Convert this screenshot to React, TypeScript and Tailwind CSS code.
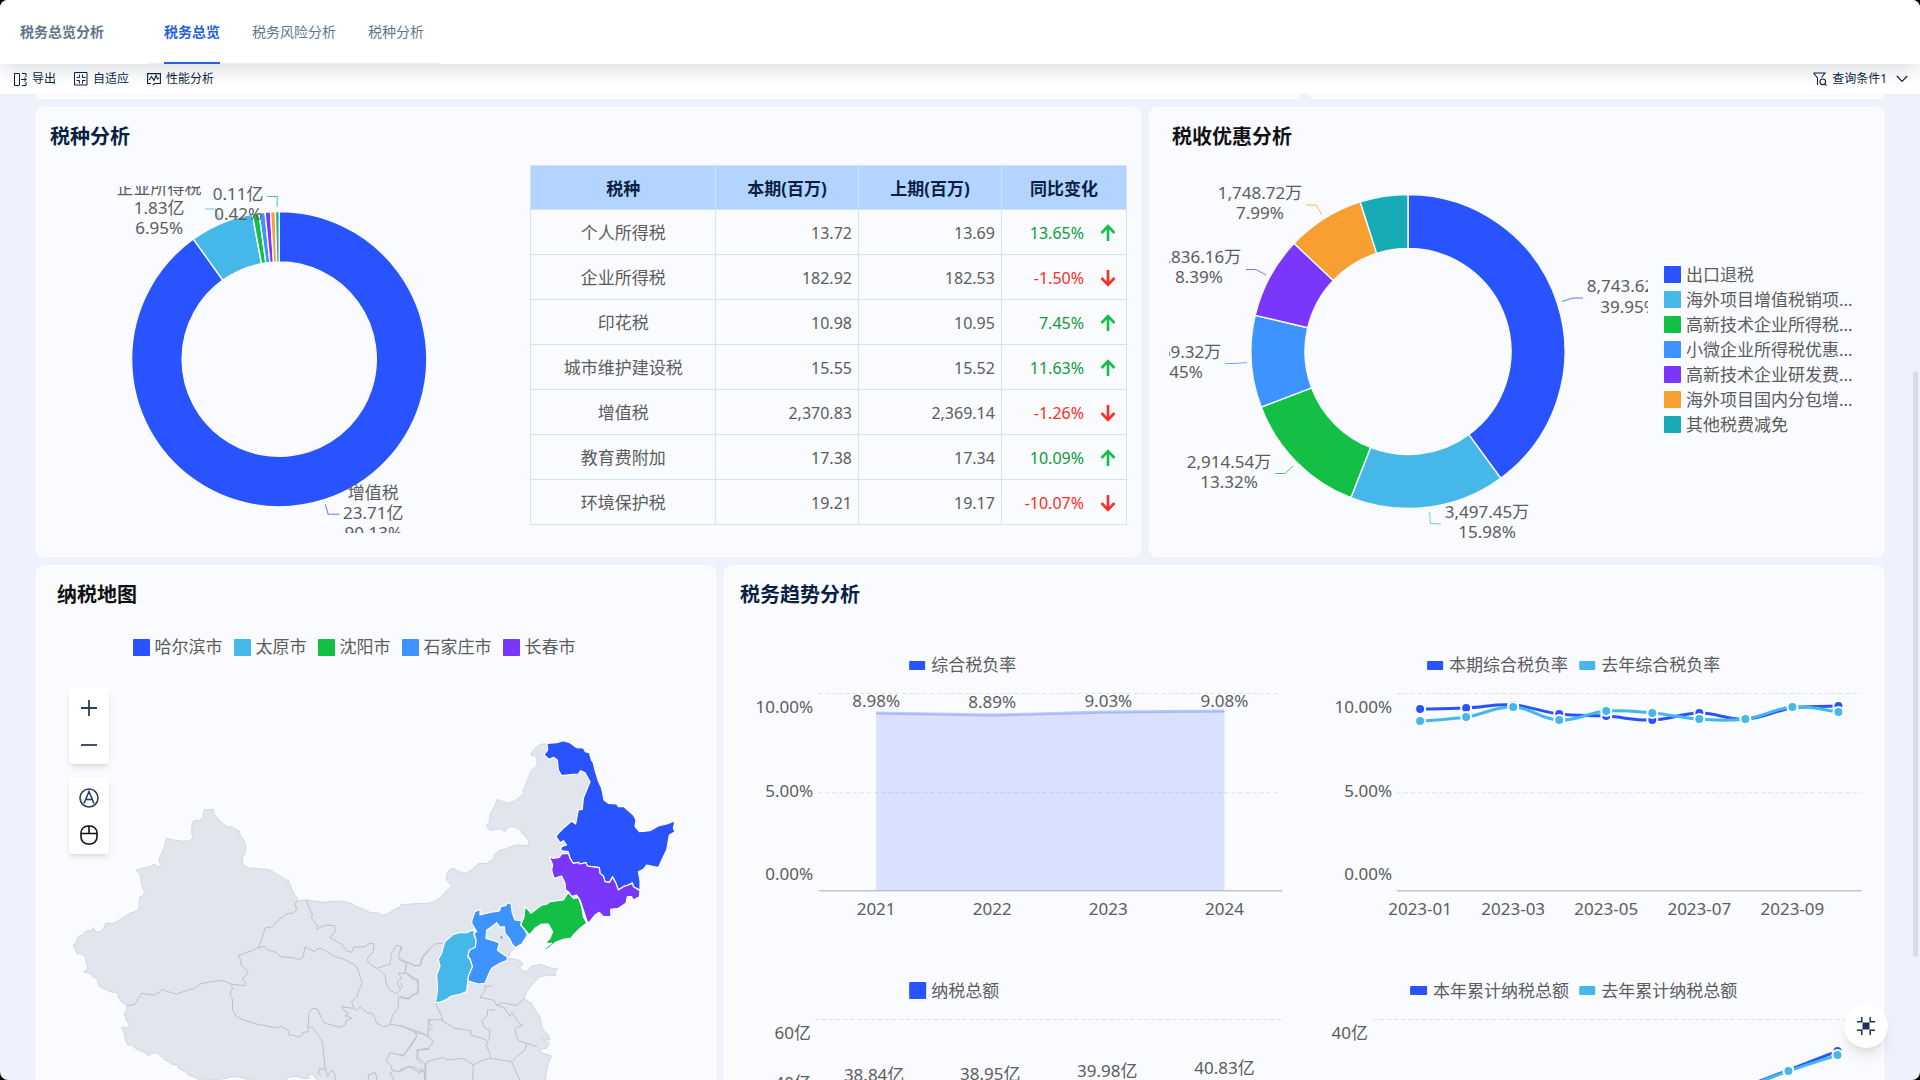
import React from "react";

const BLUE = "#2953ff";
const CYAN = "#45b8e9";
const GREEN = "#14bf45";
const SKY = "#3d93ff";
const PURPLE = "#7a37fb";
const ORANGE = "#f79f30";
const TEAL = "#17abb5";
const PALETTE = [BLUE, CYAN, GREEN, SKY, PURPLE, ORANGE, TEAL];

type Point = [number, number];

const taxRows = [
  { name: "个人所得税", current: "13.72", previous: "13.69", change: "13.65%", up: true },
  { name: "企业所得税", current: "182.92", previous: "182.53", change: "-1.50%", up: false },
  { name: "印花税", current: "10.98", previous: "10.95", change: "7.45%", up: true },
  { name: "城市维护建设税", current: "15.55", previous: "15.52", change: "11.63%", up: true },
  { name: "增值税", current: "2,370.83", previous: "2,369.14", change: "-1.26%", up: false },
  { name: "教育费附加", current: "17.38", previous: "17.34", change: "10.09%", up: true },
  { name: "环境保护税", current: "19.21", previous: "19.17", change: "-10.07%", up: false },
];

const taxSlices = [2370.83, 182.92, 19.21, 17.38, 15.55, 13.72, 10.98];
const reliefSlices = [8743.62, 3497.45, 2914.54, 2069.32, 1836.16, 1748.72, 1076.6];

const reliefLegend = [
  "出口退税",
  "海外项目增值税销项...",
  "高新技术企业所得税...",
  "小微企业所得税优惠...",
  "高新技术企业研发费...",
  "海外项目国内分包增...",
  "其他税费减免",
];

const cities = ["哈尔滨市", "太原市", "沈阳市", "石家庄市", "长春市"];

const swatches = [
  "bg-[#2953ff]",
  "bg-[#45b8e9]",
  "bg-[#14bf45]",
  "bg-[#3d93ff]",
  "bg-[#7a37fb]",
  "bg-[#f79f30]",
  "bg-[#17abb5]",
];

function Donut({ values, cx, cy, outer, inner }: { values: number[]; cx: number; cy: number; outer: number; inner: number }) {
  const total = values.reduce((a, b) => a + b, 0);
  let start = -Math.PI / 2;
  return (
    <g stroke="#f9fbff" strokeWidth={1.4} strokeLinejoin="round">
      {values.map((v, i) => {
        const end = start + (v / total) * Math.PI * 2;
        const large = end - start > Math.PI ? 1 : 0;
        const at = (r: number, a: number) => `${(cx + r * Math.cos(a)).toFixed(2)} ${(cy + r * Math.sin(a)).toFixed(2)}`;
        const d = `M${at(outer, start)}A${outer} ${outer} 0 ${large} 1 ${at(outer, end)}L${at(inner, end)}A${inner} ${inner} 0 ${large} 0 ${at(inner, start)}Z`;
        start = end;
        return <path key={i} d={d} fill={PALETTE[i]} />;
      })}
    </g>
  );
}

function Label({ x, y, anchor = "middle", children }: { x: number; y: number; anchor?: "start" | "middle" | "end"; children: string }) {
  return (
    <text x={x} y={y + 6} textAnchor={anchor} fontSize={17} fill="#5c5c5c">
      {children}
    </text>
  );
}

function Lead({ points, color }: { points: string; color: string }) {
  return <polyline points={points} fill="none" stroke={color} strokeWidth={1} opacity={0.75} />;
}

function GridLine({ x1, x2, y }: { x1: number; x2: number; y: number }) {
  return <line x1={x1} x2={x2} y1={y} y2={y} stroke="#dfe1e6" strokeDasharray="4 3" />;
}

function smooth(points: Point[]) {
  let d = `M${points[0][0]} ${points[0][1]}`;
  for (let i = 0; i < points.length - 1; i++) {
    const p0 = points[i - 1] ?? points[i];
    const p1 = points[i];
    const p2 = points[i + 1];
    const p3 = points[i + 2] ?? p2;
    d += `C${p1[0] + (p2[0] - p0[0]) / 5} ${p1[1] + (p2[1] - p0[1]) / 5} ${p2[0] - (p3[0] - p1[0]) / 5} ${p2[1] - (p3[1] - p1[1]) / 5} ${p2[0]} ${p2[1]}`;
  }
  return d;
}

function Series({ points, color }: { points: Point[]; color: string }) {
  return (
    <g>
      <path d={smooth(points)} fill="none" stroke={color} strokeWidth={3} />
      {points.map(([x, y]) => (
        <circle key={x} cx={x} cy={y} r={5} fill={color} stroke="#fff" strokeWidth={2} />
      ))}
    </g>
  );
}

function Card({ title, dark, className, titleClass, children }: { title: string; dark?: boolean; className: string; titleClass?: string; children: React.ReactNode }) {
  return (
    <section className={`rounded-lg border border-white bg-[#f9fbff] pt-3.5 ${className}`}>
      <h2 className={`text-xl leading-[30px] font-bold ${dark ? "text-[#111]" : "text-[#0a1f44]"} ${titleClass ?? ""}`}>{title}</h2>
      {children}
    </section>
  );
}

function Arrow({ up }: { up: boolean }) {
  return (
    <svg width="16" height="18" viewBox="0 0 16 18" fill="none" strokeWidth="2.6" stroke={up ? GREEN : "#ff2d23"}>
      {up ? <path d="M8 17V2.5M1.5 9 8 2.2 14.500 9" /> : <path d="M8 1v14.500M1.500 9 8 15.800 14.500 9" />}
    </svg>
  );
}

function TaxTable() {
  return (
    <table className="mt-[13px] w-full table-fixed border-collapse text-[17px] leading-6 text-[#5c5c5c]">
      <colgroup>
        <col className="w-[31%]" />
        <col className="w-[24%]" />
        <col className="w-[24%]" />
        <col className="w-[21%]" />
      </colgroup>
      <thead>
        <tr className="h-11 bg-[#b3d4ff] text-[#0a1f44]">
          {["税种", "本期(百万)", "上期(百万)", "同比变化"].map((h) => (
            <th key={h} className="border border-[#cfe3ff] pt-0.5 font-bold">{h}</th>
          ))}
        </tr>
      </thead>
      <tbody>
        {taxRows.map((r) => (
          <tr key={r.name} className="h-[45px]">
            <td className="border border-[#cfe3ff] pt-0.5 text-center">{r.name}</td>
            <td className="border border-[#cfe3ff] pt-0.5 pr-1.5 text-right text-base">{r.current}</td>
            <td className="border border-[#cfe3ff] pt-0.5 pr-1.5 text-right text-base">{r.previous}</td>
            <td className={`border border-[#cfe3ff] pt-0.5 pr-2.5 text-base ${r.up ? "text-[#0f9a36]" : "text-[#ff2d23]"}`}>
              <span className="flex items-center justify-end gap-4">
                {r.change}
                <Arrow up={r.up} />
              </span>
            </td>
          </tr>
        ))}
      </tbody>
    </table>
  );
}

function ChinaMap() {
  return (
    <svg viewBox="37 680 678 400" className="block w-full">
      <g strokeWidth={3} strokeLinejoin="round" stroke="#d3d6dc" fill="#e0e5ee">
        <g transform="translate(30 760) scale(.33333)">
          <path d="M1204 427 1196 431 1170 432 1130 434 1110 440 1090 450 1075 460 1062 466 1046 464 1046 456 1042 459 1020 457 1000 448 985 441 972 438 968 432 950 427 940 424 900 424 890 427 860 424 828 420 805 422 802 415 792 402 785 385 778 370 775 359 770 362 755 351 740 342 718 329 690 327 655 323 642 318 637 305 638 290 646 280 647 258 640 240 630 225 628 213 615 207 605 200 592 200 575 188 572 184 565 178 552 162 550 148 530 150 524 148 521 155 519 172 510 181 492 182 487 188 485 215 488 235 483 240 465 244 435 241 410 235 405 250 402 265 390 290 387 303 395 318 380 320 375 312 360 320 325 328 319 330 331 345 334 370 343 395 341 405 330 411 328 418 327 445 320 453 300 460 280 473 262 484 250 490 228 489 217 512 198 517 190 503 185 510 165 515 160 524 145 530 140 540 141 548 130 555 137 572 142 583 150 580 165 587 169 605 174 628 160 636 180 640 190 652 200 655 208 680 225 687 240 695 262 698 268 718 290 738 292 745 283 760 287 775 298 797 292 805 278 800 275 805 283 820 286 840 293 855 305 855 320 868 340 875 358 888 365 880 375 878 385 882 400 895 430 915 440 912 445 924 470 938 475 945 490 950 500 956 530 962 560 958 590 955 605 950 625 951 645 956 690 965 760 962 780 950 800 949 820 956 835 955 838 942 850 944 860 958 900 1000 1204 1000" />
        </g>
        <g transform="translate(400 720) scale(.33333)">
          <path d="M0 555 50 551 84 550 100 545 120 534 140 512 155 498 140 480 140 463 150 448 162 446 175 455 200 459 215 450 235 431 260 430 280 418 285 403 300 390 315 388 330 381 350 375 388 377 385 360 375 350 360 330 345 321 328 319 315 335 300 326 270 332 262 322 260 315 268 308 270 285 280 265 293 237 300 242 325 250 345 243 355 233 373 222 368 212 372 205 385 175 392 155 412 135 408 108 394 106 394 98 410 80 425 72 440 72 530 100 580 150 590 200 600 350 550 500 500 560 430 590 383 645 365 672 345 683 330 695 328 705 322 715 345 718 362 722 368 735 358 740 365 752 380 755 395 738 420 733 440 740 455 745 473 745 465 755 467 767 445 765 420 770 400 790 380 815 372 835 395 850 402 865 420 890 425 915 430 930 445 945 450 960 425 955 448 968 440 985 415 990 430 1000 455 1008 445 1030 440 1050 435 1085 0 1100" />
        </g>
      </g>
      {/* provincial borders */}
      <g fill="none" stroke="#bbbfc9" strokeWidth={3} strokeLinejoin="round">
        <g transform="translate(30 760) scale(.33333)">
          <path d="M802 422 795 432 800 450 790 459 770 461 745 480 728 500 705 504 698 530 685 563 665 572 625 587 632 600 633 615 655 635 645 650 637 655 648 670 645 677 605 673 590 666 570 661 540 666 510 672 495 685 475 690 440 702 410 694 398 688 375 706 335 700 325 715 315 733 290 738" />
          <path d="M600 675 608 685 600 705 608 720 607 750 620 770 640 780 680 792 740 804 752 799 775 812 777 826 788 825 800 830 815 828 818 818 835 815 833 800 836 785 835 760 848 745 862 747 875 775 885 790 905 795 930 802 945 795 950 780 965 775 955 768 945 768 955 760 940 750 935 740 960 744 972 745" />
          <path d="M685 563 705 559 710 568 740 578 750 590 790 593 800 598 812 596 820 590 825 560 855 575 860 567 875 565 905 585 920 592 940 597 975 615 985 630 990 650 997 670 985 695 982 708 965 725 972 745 980 752 990 740 1010 757 1030 762 1040 790 1060 800 1085 793 1120 800 1155 812" />
          <path d="M828 418 847 465 845 475 862 495 860 507 885 495 915 497 915 515 900 533 935 553 950 573 965 577 970 562 1005 560 1020 550 1032 552 1030 575 1012 595 1015 608 1040 625 1080 612 1085 580 1100 555 1113 560 1106 590 1108 600 1130 610 1125 640 1105 640 1115 655 1102 665 1106 682 1113 688 1100 702 1080 690 1070 675 1065 645 1045 628" />
          <path d="M1130 605 1150 615 1170 617 1175 600 1200 565M1125 635 1145 655 1165 660 1165 700 1145 705 1140 717 1118 715 1105 710 1105 745 1088 765 1080 793M835 800 850 805 868 830 878 850 885 920 880 930 870 925 865 940 875 948M885 920 892 950 905 930 915 945 915 960" />
          <path d="M1155 812 1160 830 1145 855 1130 875 1120 888 1080 878 1068 905 1085 918 1085 930 1110 935 1112 928 1140 920 1170 940 1175 925 1182 935 1185 960M1155 812 1175 818 1195 830 1195 800 1200 778M1200 868 1165 870 1160 895 1175 912M1187 965 1187 915 1200 903M1015 960 1015 945 1035 937 1040 950 1038 965M1095 965 1080 940 1090 933" />
        </g>
        <g transform="translate(400 720) scale(.33333)">
          <path d="M0 715 12 722 45 738 62 735 65 712 90 685 105 672 128 670M18 735 15 755 50 780 55 800 50 820 20 835 0 828M0 680 8 685 0 693M0 790 8 797 0 808M107 848 125 890 130 905 165 925 200 930 212 932 212 945 245 955 262 962M130 900 85 898 85 908 98 920 82 937" />
          <path d="M275 797 255 800 255 812 240 832 280 840 290 855 310 848 350 857 372 837M285 870 262 870 262 885 245 905 255 925 270 930 268 955 258 975 270 1000 272 1015 335 1025 350 1010 375 990 380 970 412 980M290 855 315 865 330 890 335 877 358 910 368 915 345 925 350 950 355 962 380 970M335 1025 350 1060 360 1080" />
          <path d="M0 915 20 925 45 937 80 945 100 965 85 985 50 990 55 1015 75 1030 75 1080M0 1005 12 1005 25 985 48 950M80 1025 130 1012 140 1020 190 1015 220 1035 250 1020 272 1015M220 1035 218 1080M0 1055 25 1040 45 1042 60 1053 75 1055" />
        </g>
      </g>
      <g transform="translate(400 720) scale(.33333)" stroke="#fff" strokeWidth={3.500} strokeLinejoin="round">
        <path fill={BLUE} d="M441 70 470 68 490 62 510 68 530 83 550 84 556 95 568 98 575 122 580 128 585 150 595 183 605 205 612 240 625 250 650 252 655 260 672 260 680 268 700 285 708 300 705 320 718 335 750 332 775 318 800 312 825 303 820 325 825 335 808 345 800 390 790 410 783 425 775 443 740 435 730 448 715 455 720 480 720 510 700 500 697 488 685 495 670 500 655 510 648 490 638 470 628 487 615 485 610 468 600 460 598 443 575 440 562 438 558 428 540 432 535 427 520 430 510 415 505 395 482 392 485 380 500 375 490 362 480 368 468 350 475 340 490 325 515 303 527 312 535 270 547 268 550 235 570 185 555 158 542 152 535 162 520 163 485 167 475 150 472 120 460 112 448 118 432 105 443 90Z" />
        <path fill={PURPLE} d="M448 410 458 415 478 412 485 402 505 400 510 415 520 430 535 427 540 432 558 428 562 438 575 440 598 443 600 460 610 468 615 485 628 487 638 472 648 490 655 510 670 500 685 495 697 490 700 500 720 512 718 530 700 540 695 530 682 530 678 550 655 565 632 568 633 590 610 590 598 577 585 585 565 610 560 600 550 570 540 540 530 525 515 530 505 515 497 510 495 490 485 468 462 475 455 450 458 435Z" />
        <path fill={GREEN} d="M375 560 385 570 393 580 412 565 425 555 440 553 450 545 490 540 505 517 520 535 535 532 545 560 550 590 560 610 540 625 520 645 512 655 490 658 465 668 445 685 430 692 432 687 455 670 435 670 450 655 458 635 445 612 425 612 405 625 388 645 375 630 362 615 372 590Z" />
        <path fill={SKY} d="M216 600 225 575 240 568 240 585 270 577 298 573 302 560 318 556 322 548 333 552 337 580 345 600 365 603 362 615 375 630 382 645 365 672 345 683 335 670 328 655 315 640 313 620 300 622 290 608 275 620 260 630 258 655 290 665 298 670 292 690 305 700 323 712 320 722 300 730 275 745 265 765 255 790 235 792 205 783 205 768 217 740 210 715 203 710 208 690 225 680 228 660 222 640 230 635 215 610Z" />
        <path fill={CYAN} d="M222 628 222 645 228 662 226 682 208 690 203 710 210 718 217 740 205 768 203 785 200 815 180 823 155 828 140 838 120 847 106 847 113 810 110 765 120 738 115 718 125 700 130 680 135 665 160 643 180 637 200 638Z" />
        <path fill={SKY} strokeWidth={1} d="M299 650 308 647 307 660Z" />
      </g>
    </svg>
  );
}

function MapControls() {
  return (
    <div className="absolute top-2 left-8 flex flex-col gap-3.5">
      <div className="flex w-10 flex-col rounded bg-white py-px shadow-md">
        <button aria-label="放大" className="flex h-[37px] items-center justify-center">
          <svg width="18" height="18" viewBox="0 0 18 18" stroke="#2c3e60" strokeWidth="1.800"><path d="M9 1v16M1 9h16" /></svg>
        </button>
        <button aria-label="缩小" className="flex h-[37px] items-center justify-center">
          <svg width="18" height="18" viewBox="0 0 18 18" stroke="#2c3e60" strokeWidth="1.800"><path d="M1 9h16" /></svg>
        </button>
      </div>
      <div className="flex w-10 flex-col rounded bg-white py-px shadow-md">
        <button aria-label="自动定位" className="flex h-[37px] items-center justify-center">
          <svg width="20" height="20" viewBox="0 0 20 20" fill="none" stroke="#2c3e60" strokeWidth="1.600">
            <circle cx="10" cy="10" r="9" />
            <path d="M5 15.500 10 3.500l5 12M6.700 11.500h6.600" />
          </svg>
        </button>
        <button aria-label="鼠标缩放" className="flex h-[37px] items-center justify-center">
          <svg width="20" height="20" viewBox="0 0 20 20" fill="none" stroke="#111" strokeWidth="1.600">
            <rect x="2" y="1" width="16" height="18" rx="7" />
            <path d="M2 8.500h16M10 1v7.500" />
          </svg>
        </button>
      </div>
    </div>
  );
}

const rateThis: Point[] = [[1420, 709], [1466, 708], [1513, 705], [1559, 714], [1606, 716], [1652, 720], [1699, 713], [1745, 719], [1792, 708], [1838, 706]];
const rateLast: Point[] = [[1420, 721], [1466, 717], [1513, 707], [1559, 720], [1606, 711], [1652, 713], [1699, 719], [1745, 719], [1792, 707], [1838, 712]];
const sumThis: Point[] = [[1690, 1100], [1739, 1087], [1788, 1069], [1837, 1050]];
const sumLast: Point[] = [[1690, 1102], [1739, 1088], [1788, 1070], [1837, 1054]];

function TrendCharts() {
  return (
    <div className="mt-[30px] grid grid-cols-2">
      <svg viewBox="741 640 565 310" className="block w-full">
        <rect x={910} y={661} width={16} height={9} rx={1} fill={BLUE} />
        <Label x={932} y={665} anchor="start">综合税负率</Label>
        <GridLine x1={819} x2={1280} y={693.5} />
        <GridLine x1={819} x2={1280} y={792.5} />
        <line x1={820} x2={1283} y1={890.5} y2={890.5} stroke="#c3c6cd" strokeWidth={1.500} />
        <path d="M877 713 993 715 1109 712 1225 711V890H877Z" fill={BLUE} opacity={0.15} />
        <path d="M877 713 993 715 1109 712 1225 711" fill="none" stroke={BLUE} strokeWidth={3} opacity={0.3} />
        <Label x={814} y={707} anchor="end">10.00%</Label>
        <Label x={814} y={791} anchor="end">5.00%</Label>
        <Label x={814} y={874} anchor="end">0.00%</Label>
        <Label x={877} y={701}>8.98%</Label>
        <Label x={993} y={702}>8.89%</Label>
        <Label x={1109} y={701}>9.03%</Label>
        <Label x={1225} y={701}>9.08%</Label>
        {["2021", "2022", "2023", "2024"].map((t, i) => (
          <Label key={t} x={877 + i * 116} y={909}>{t}</Label>
        ))}
      </svg>
      <svg viewBox="1306 640 565 310" className="block w-full">
        <rect x={1427} y={661} width={16} height={9} rx={1} fill={BLUE} />
        <Label x={1449} y={665} anchor="start">本期综合税负率</Label>
        <rect x={1579} y={661} width={16} height={9} rx={1} fill={CYAN} />
        <Label x={1601} y={665} anchor="start">去年综合税负率</Label>
        <GridLine x1={1397} x2={1861} y={693.5} />
        <GridLine x1={1397} x2={1861} y={792.5} />
        <line x1={1397} x2={1861} y1={890.5} y2={890.5} stroke="#c3c6cd" strokeWidth={1.500} />
        <Label x={1392} y={707} anchor="end">10.00%</Label>
        <Label x={1392} y={791} anchor="end">5.00%</Label>
        <Label x={1392} y={874} anchor="end">0.00%</Label>
        <Series points={rateThis} color={BLUE} />
        <Series points={rateLast} color={CYAN} />
        {["2023-01", "2023-03", "2023-05", "2023-07", "2023-09"].map((t, i) => (
          <Label key={t} x={1420 + i * 93} y={909}>{t}</Label>
        ))}
      </svg>
      <svg viewBox="741 950 565 200" className="block w-full">
        <rect x={910} y={981} width={17} height={17} rx={1} fill={BLUE} />
        <Label x={932} y={990} anchor="start">纳税总额</Label>
        <GridLine x1={816} x2={1283} y={1018.5} />
        <Label x={812} y={1032} anchor="end">60亿</Label>
        <Label x={812} y={1082} anchor="end">40亿</Label>
        <Label x={875} y={1074}>38.84亿</Label>
        <Label x={991} y={1073}>38.95亿</Label>
        <Label x={1108} y={1070}>39.98亿</Label>
        <Label x={1225} y={1067}>40.83亿</Label>
      </svg>
      <svg viewBox="1306 950 565 200" className="block w-full">
        <rect x={1410} y={985} width={17} height={9} rx={1} fill={BLUE} />
        <Label x={1433} y={990} anchor="start">本年累计纳税总额</Label>
        <rect x={1579} y={985} width={16} height={9} rx={1} fill={CYAN} />
        <Label x={1601} y={990} anchor="start">去年累计纳税总额</Label>
        <GridLine x1={1373} x2={1861} y={1018.5} />
        <Label x={1368} y={1032} anchor="end">40亿</Label>
        <Series points={sumThis} color={BLUE} />
        <Series points={sumLast} color={CYAN} />
      </svg>
    </div>
  );
}

export default function App() {
  return (
    <div className="h-screen overflow-hidden bg-black font-['Noto_Sans','Noto_Sans_CJK_SC',sans-serif]">
      <div className="relative flex h-full flex-col overflow-hidden rounded-lg bg-[#eff2fc]">
        <header className="relative z-10 flex h-16 shrink-0 items-center bg-white pl-5 text-sm text-[#64748b] shadow-[0_8px_20px_-3px_rgba(15,23,42,0.15)]">
          <h1 className="font-bold">税务总览分析</h1>
          <nav className="ml-11 flex h-full gap-8 border-b border-[#eeeeee] px-4">
            <a href="#overview" className="-mb-px flex items-center border-b-2 border-[#2b5fd9] pt-0.5 font-bold text-[#2b5fd9]">税务总览</a>
            <a href="#risk" className="flex items-center">税务风险分析</a>
            <a href="#types" className="flex items-center">税种分析</a>
          </nav>
        </header>

        <div className="flex h-[30px] shrink-0 items-center bg-white pr-3 pl-3.5 text-xs text-[#0a1f44]">
          <div className="relative z-20 flex flex-1 items-center gap-[18px]">
            <button className="flex items-center gap-[5px]">
              <svg width="13" height="13" viewBox="0 0 13 13" fill="none" stroke="currentColor" strokeWidth="1">
                <path d="M5 .5H.5v12H5M5.500.5v12M8 .5h4v3.500M8 12.500h4V9M7 6.500h5M10 4.200l2.300 2.300L10 8.800" />
              </svg>
              导出
            </button>
            <button className="flex items-center gap-[5px]">
              <svg width="14" height="14" viewBox="0 0 14 14" fill="none" stroke="currentColor" strokeWidth="1">
                <path d="M.5.500h12.500v12.500H.5zM5.500 2.500v3H2.500M8.500 2.500v3h3M5.500 11.500v-3H2.500M8.500 11.500v-3h3" />
              </svg>
              自适应
            </button>
            <button className="flex items-center gap-[5px]">
              <svg width="14" height="14" viewBox="0 0 14 14" fill="none" stroke="currentColor" strokeWidth="1.100">
                <path d="M4 11.500H.6V1.600h12.800v9.900H7.500L5.800 13.200M2 8l2.500-3.500L7 8.500l2-5 1.500 3.500 1.500-1" />
              </svg>
              性能分析
            </button>
          </div>
          <button className="relative z-20 flex items-center gap-[5px]">
            <svg width="14" height="14" viewBox="0 0 14 14" fill="none" stroke="currentColor" strokeWidth="1.100">
              <path d="M.5 1h11.500L8.500 5.500M.5 1l4 5v7M12 12.300l1.500 1.200" />
              <circle cx="9.800" cy="9.800" r="2.800" />
            </svg>
            查询条件1
            <svg width="12" height="8" viewBox="0 0 12 8" fill="none" stroke="currentColor" strokeWidth="1.200" className="ml-1">
              <path d="m.8 1 5.200 5.500L11.200 1" />
            </svg>
          </button>
        </div>

        <main className="relative z-20 flex min-h-0 flex-1 flex-col gap-2 overflow-hidden px-9">
          <div className="grid shrink-0 grid-cols-[253fr_115fr] gap-2">
            <div className="h-[5px] rounded-b-lg border border-t-0 border-white bg-[#f9fbff]" />
            <div className="h-[5px] rounded-b-lg border border-t-0 border-white bg-[#f9fbff]" />
          </div>

          <div className="grid shrink-0 grid-cols-[221fr_147fr] gap-2">
            <Card title="税种分析" className="pr-[13px] pb-[23px] pl-[13px]">
              <div className="grid grid-cols-[233fr_298fr] items-start gap-3.5">
                <svg viewBox="50 186 466 347" className="mt-[34px] block w-full">
                  <Donut values={taxSlices} cx={279} cy={359} outer={147.5} inner={97} />
                  <Lead points="205,209 215,209 219,218" color={CYAN} />
                  <Lead points="267,196.5 277,196.5 277,207" color={TEAL} />
                  <Lead points="325,504 328,514 339,514" color={BLUE} />
                  <Label x={159} y={188}>企业所得税</Label>
                  <Label x={159} y={208}>1.83亿</Label>
                  <Label x={159} y={228}>6.95%</Label>
                  <Label x={238} y={194}>0.11亿</Label>
                  <Label x={238} y={214}>0.42%</Label>
                  <Label x={373} y={493}>增值税</Label>
                  <Label x={373} y={513}>23.71亿</Label>
                  <Label x={373} y={533}>90.13%</Label>
                </svg>
                <TaxTable />
              </div>
            </Card>

            <Card title="税收优惠分析" dark className="pr-4 pb-[18px] pl-[19px]" titleClass="pl-[3px]">
              <div className="mt-2 grid grid-cols-[479fr_203fr] items-center gap-4">
                <svg viewBox="1169 160 479 378" className="block w-full">
                  <Donut values={reliefSlices} cx={1408} cy={351.5} outer={157} inner={103} />
                  <Lead points="1306,205 1316,205 1322,215" color={ORANGE} />
                  <Lead points="1246,269.5 1256,269.5 1266,275" color={PURPLE} />
                  <Lead points="1225,363.5 1235,363.5 1247,362.5" color={SKY} />
                  <Lead points="1275,473.5 1285,473.5 1293,466" color={GREEN} />
                  <Lead points="1429.5,512 1430.5,523.5 1441,524" color={CYAN} />
                  <Lead points="1562,301.500 1573,298 1583,298" color={BLUE} />
                  <Label x={1260} y={193}>1,748.72万</Label>
                  <Label x={1260} y={213}>7.99%</Label>
                  <Label x={1199} y={257}>1,836.16万</Label>
                  <Label x={1199} y={277}>8.39%</Label>
                  <Label x={1179} y={352}>2,069.32万</Label>
                  <Label x={1179} y={372}>9.45%</Label>
                  <Label x={1229} y={462}>2,914.54万</Label>
                  <Label x={1229} y={482}>13.32%</Label>
                  <Label x={1487} y={512}>3,497.45万</Label>
                  <Label x={1487} y={532}>15.98%</Label>
                  <Label x={1629} y={286}>8,743.62万</Label>
                  <Label x={1629} y={307}>39.95%</Label>
                </svg>
                <ul className="text-[17px] leading-[25px] text-[#5c5c5c]">
                  {reliefLegend.map((name, i) => (
                    <li key={name} className="flex items-center gap-[5px] whitespace-nowrap">
                      <span className={`size-[17px] shrink-0 rounded-[1px] ${swatches[i]}`} />
                      {name}
                    </li>
                  ))}
                </ul>
              </div>
            </Card>
          </div>

          <div className="grid shrink-0 grid-cols-[17fr_29fr] gap-2">
            <Card title="纳税地图" dark className="" titleClass="pl-5">
              <ul className="mt-6 mr-11 flex justify-center gap-[11px] text-[17px] leading-[26px] text-[#5c5c5c]">
                {cities.map((name, i) => (
                  <li key={name} className="flex items-center gap-[5px]">
                    <span className={`size-[17px] rounded-[1px] ${swatches[i]}`} />
                    {name}
                  </li>
                ))}
              </ul>
              <div className="relative mt-5">
                <ChinaMap />
                <MapControls />
              </div>
            </Card>

            <Card title="税务趋势分析" className="pr-3 pl-[15px]">
              <TrendCharts />
            </Card>
          </div>
        </main>

        <div className="absolute top-[371px] right-0.5 z-20 h-[586px] w-[5px] rounded-full bg-[#d9dce8]" />
        <button aria-label="全屏" className="absolute right-8 bottom-8 z-30 flex size-11 items-center justify-center rounded-full bg-white shadow-lg">
          <svg width="18" height="18" viewBox="0 0 18 18" fill="none" stroke="#1f3157" strokeWidth="1.500">
            <path d="M4.800 0v4.800H0M13.200 0v4.800H18M4.800 18v-4.800H0M13.200 18v-4.800H18" />
            <rect x="5.500" y="5.500" width="7" height="7" fill="#1f3157" stroke="none" />
          </svg>
        </button>
      </div>
    </div>
  );
}
